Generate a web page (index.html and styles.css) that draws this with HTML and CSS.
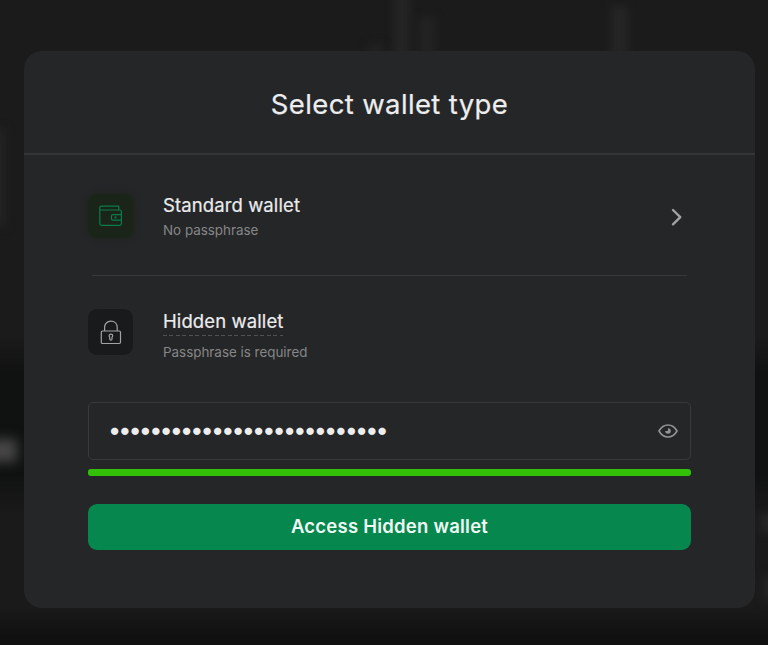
FILE: index.html
```html
<!DOCTYPE html>
<html lang="en">
<head>
<meta charset="utf-8">
<title>Select wallet type</title>
<link rel="stylesheet" href="styles.css">
</head>
<body>
<div class="backdrop" aria-hidden="true">
  <i class="haze haze-a"></i><i class="haze haze-b"></i><i class="haze haze-c"></i><i class="haze haze-d"></i><i class="haze haze-e"></i><i class="haze haze-f"></i><i class="haze haze-g"></i><i class="haze haze-h"></i>
</div>
<main class="modal">
  <header class="modal-header"><h1>Select wallet type</h1></header>
  <div class="modal-body">
    <section class="option standard">
      <div class="tile tile-green">
        <svg width="24" height="22" viewBox="0 0 24 22" fill="none" stroke="#087d49" stroke-width="1.2" stroke-linejoin="round"><path d="M19.8 5V1.2H2.2Q.8 1.2.8 2.6V18.6Q.8 20.4 2.6 20.4H20.6Q22.4 20.4 22.4 18.6V6.6Q22.4 5 20.6 5H.8M22.4 9.6H14Q12.4 9.6 12.4 11V13.6Q12.4 15.2 14 15.2H22.4"/><circle cx="16.5" cy="12.4" r=".5"/></svg>
      </div>
      <div class="copy"><h2>Standard wallet</h2><p>No passphrase</p></div>
      <svg class="chevron" width="12" height="18" viewBox="0 0 12 18" fill="none" stroke="#a0a1a2" stroke-width="2.4" stroke-linecap="round" stroke-linejoin="round"><path d="M2 2L9.3 9.2L2 16.3"/></svg>
    </section>
    <hr>
    <section class="option hidden-wallet">
      <div class="tile tile-dark">
        <svg width="22" height="25" viewBox="0 0 22 25" fill="none" stroke="#a2a3a4" stroke-width="1.2" stroke-linejoin="round"><rect x="1.3" y="11" width="19.2" height="12.5" rx="1.2"/><path d="M4.6 11V7.5C4.6 3.8 7.1 1.2 10.9 1.2S17.2 3.8 17.2 7.5V11"/><path d="M9.1 15.8Q9.1 14.2 10.9 14.2T12.7 15.8Q12.7 16.7 12 17.2V19Q12 20.1 10.9 20.1T9.8 19V17.2Q9.1 16.7 9.1 15.8Z"/></svg>
      </div>
      <div class="copy"><h2 class="dashed">Hidden wallet</h2><p>Passphrase is required</p></div>
    </section>
    <div class="field">
      <span class="secret">•••••••••••••••••••••••••••</span>
      <svg width="20" height="14" viewBox="0 0 20 14" fill="none" stroke="#929394" stroke-width="1.6" stroke-linejoin="round"><path d="M1 7C3.2 3 6.3 1 10 1S16.8 3 19 7C16.8 11 13.7 13 10 13S3.2 11 1 7Z"/><path d="M10 4.2A2.8 2.8 0 1 1 7.2 7H9.3Q10 7 10 6.3Z" fill="#929394" stroke="none"/></svg>
    </div>
    <div class="strength"></div>
    <button class="submit">Access Hidden wallet</button>
  </div>
</main>
</body>
</html>
```

FILE: styles.css
```css
* { box-sizing: border-box; }
body {
  margin: 0;
  width: 768px;
  height: 645px;
  overflow: hidden;
  background: #1b1b1b;
  font-family: Inter, "Liberation Sans", sans-serif;
}
h1, h2, p { margin: 0; font-weight: 400; white-space: nowrap; }

.backdrop {
  position: absolute;
  inset: 0;
  overflow: hidden;
  background: linear-gradient(#1b1b1b 0, #1b1b1b 335px, #101111 372px, #101111 475px, #1a1a1a 515px, #1a1a1a 608px, #101010 636px, #101010 645px);
}
.haze { position: absolute; filter: blur(4px); background: #252525; }
.haze-a { left: 394px; top: -10px; width: 16px; height: 80px; }
.haze-b { left: 419px; top: 17px; width: 16px; height: 60px; background: #232324; }
.haze-c { left: 611px; top: 6px; width: 17px; height: 70px; }
.haze-d { left: 368px; top: 44px; width: 15px; height: 20px; background: #222; }
.haze-e { left: -16px; top: 439px; width: 33px; height: 23px; background: #464646; filter: blur(6px); }
.haze-f { left: -12px; top: 128px; width: 18px; height: 98px; background: #222; }
.haze-g { left: 761px; top: 514px; width: 20px; height: 18px; background: #282828; filter: blur(5px); }
.haze-h { left: 763px; top: 576px; width: 20px; height: 24px; background: #252525; filter: blur(5px); }

.modal {
  position: relative;
  width: 731px;
  height: 557px;
  margin: 51px 0 0 24px;
  border-radius: 18px;
  background: #252628;
}
.modal-header {
  height: 104px;
  padding-top: 35px;
  border-bottom: 2px solid #343537;
  text-align: center;
}
h1 { color: #ededee; font-size: 27.5px; line-height: 36px; letter-spacing: .37px; -webkit-text-stroke: .2px #ededee; }
.modal-body { padding: 0 64px; }
.option { display: flex; align-items: flex-start; }
.standard { height: 120px; padding-top: 38px; }
.tile {
  flex: none;
  display: flex;
  align-items: center;
  justify-content: center;
  width: 45px;
  height: 46px;
  margin-right: 30px;
  border-radius: 9px;
}
.tile-green { height: 44px; margin-top: 1px; background: #1b2418; box-shadow: 0 0 6px #1b2418; }
.tile-dark { background: #191a1b; }
.copy { flex: 1; }
h2 { width: max-content; color: #ebebec; font-size: 18.5px; line-height: 24px; letter-spacing: .1px; -webkit-text-stroke: .2px #ebebec; }
p { color: #858687; font-size: 13.4px; line-height: 20px; }
.standard h2 { margin-bottom: 3px; }
.chevron { margin: 15px 8px 0 0; }
hr { margin: 0 4px; height: 1px; border: 0; background: #38393b; }
.hidden-wallet { height: 126px; padding-top: 33px; }
.dashed {
  margin-bottom: 6px;
  height: 27px;
  background: repeating-linear-gradient(90deg, #505153 0 4px, transparent 4px 6.5px) bottom / 100% 1px no-repeat;
}
.field {
  display: flex;
  align-items: center;
  justify-content: space-between;
  height: 58px;
  padding: 0 12px 0 19px;
  border: 1.5px solid #38393b;
  border-radius: 5px;
}
.field svg { margin-bottom: 1px; }
.secret { margin-bottom: 3px; color: #ededee; font-size: 23.5px; line-height: 24px; letter-spacing: -2.93px; white-space: nowrap; }
.strength { height: 7px; margin-top: 9px; border-radius: 3px; background: #33c008; }
.submit {
  display: block;
  width: 100%;
  height: 46px;
  margin-top: 28px;
  padding: 0 0 1px;
  border: 0;
  border-radius: 9px;
  background: #05874e;
  color: #f0faf4;
  font: 600 18.5px/45px Inter, "Liberation Sans", sans-serif;
  letter-spacing: .23px;
}
```
